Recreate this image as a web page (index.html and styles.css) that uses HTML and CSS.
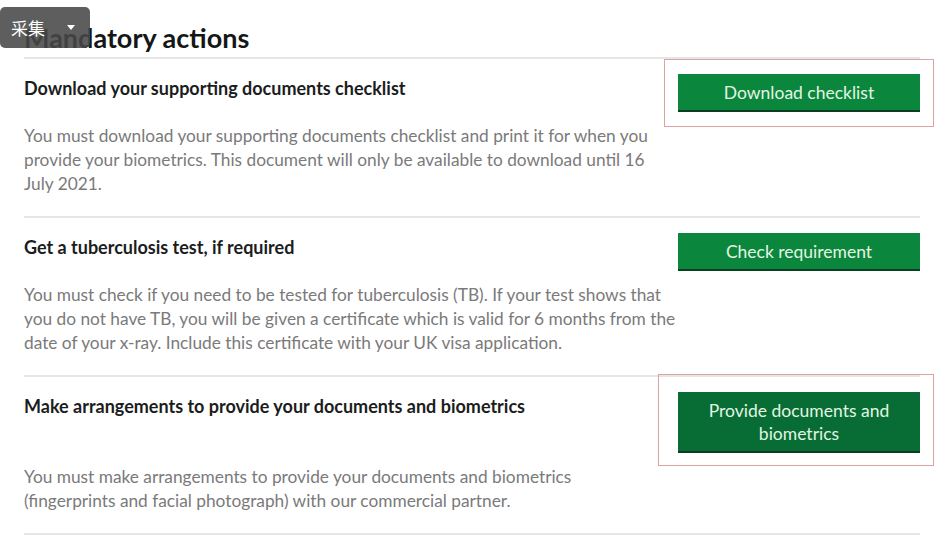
FILE: index.html
```html
<!DOCTYPE html>
<html lang="en">
<head>
<meta charset="utf-8">
<title>Mandatory actions</title>
<link rel="stylesheet" href="styles.css">
</head>
<body>
<div class="badge"><span class="badge-text">采集</span><span class="badge-caret"></span></div>
<main class="page">
  <h1 class="title">Mandatory actions</h1>
  <section class="action">
    <div class="action-head">
      <h2 class="action-title">Download your supporting documents checklist</h2>
      <div class="btn-wrap marked marked-1"><a class="btn">Download checklist</a></div>
    </div>
    <p class="action-text">You must download your supporting documents checklist and print it for when you<br>provide your biometrics. This document will only be available to download until 16<br>July 2021.</p>
  </section>
  <section class="action">
    <div class="action-head">
      <h2 class="action-title">Get a tuberculosis test, if required</h2>
      <div class="btn-wrap"><a class="btn">Check requirement</a></div>
    </div>
    <p class="action-text">You must check if you need to be tested for tuberculosis (TB). If your test shows that<br>you do not have TB, you will be given a certificate which is valid for 6 months from the<br>date of your x-ray. Include this certificate with your UK visa application.</p>
  </section>
  <section class="action action-last">
    <div class="action-head">
      <h2 class="action-title">Make arrangements to provide your documents and biometrics</h2>
      <div class="btn-wrap marked marked-3"><a class="btn btn-dark">Provide documents and<br>biometrics</a></div>
    </div>
    <p class="action-text">You must make arrangements to provide your documents and biometrics<br>(fingerprints and facial photograph) with our commercial partner.</p>
  </section>
</main>
</body>
</html>
```

FILE: styles.css
```css
html, body {
  margin: 0;
  padding: 0;
  background: #ffffff;
}

body {
  font-family: Lato, "Noto Sans", "Liberation Sans", sans-serif;
  color: #1d1f1f;
}

.page {
  padding: 0 30px 0 24px;
}

.title {
  margin: 0;
  padding-top: 22px;
  font-size: 27px;
  line-height: 32px;
  font-weight: 700;
  color: #151717;
  border-bottom: 2px solid #e6e6e6;
  padding-bottom: 3px;
}

.action {
  border-bottom: 2px solid #e6e6e6;
  padding: 15px 0 20px;
}

.action-last {
  padding-bottom: 20px;
}

.action-head {
  display: flex;
  align-items: flex-start;
  justify-content: space-between;
}

.action-title {
  margin: 2px 0 0;
  font-size: 18px;
  line-height: 24px;
  font-weight: 700;
  color: #1b1d1d;
}

.btn-wrap {
  position: relative;
  width: 242px;
  flex: none;
}

.btn {
  display: block;
  box-sizing: border-box;
  width: 242px;
  padding: 7px 10px 6px;
  background: #0b863d;
  box-shadow: 0 2px 0 #0a3e22;
  color: #e3f5e3;
  font-size: 17.5px;
  line-height: 23px;
  text-align: center;
  text-decoration: none;
}

.btn-dark {
  background: #076d34;
  padding-top: 7px;
  padding-bottom: 6px;
}

.marked::before {
  content: "";
  position: absolute;
  border: 1px solid #dba3a3;
  pointer-events: none;
}

.marked-1::before {
  left: -14px;
  right: -14px;
  top: -15px;
  bottom: -17px;
}

.marked-3::before {
  left: -20px;
  right: -14px;
  top: -18px;
  bottom: -15px;
}

.action-text {
  margin: 14px 0 0;
  max-width: 700px;
  font-size: 17.3px;
  line-height: 24px;
  color: #7a7a7a;
}

.badge {
  position: absolute;
  left: 0;
  top: 7px;
  width: 90px;
  height: 41px;
  border-radius: 5px;
  background: rgba(72, 72, 72, 0.88);
  display: flex;
  align-items: center;
  padding-left: 11px;
  box-sizing: border-box;
  z-index: 5;
}

.badge-text {
  color: #ffffff;
  font-family: "Noto Sans CJK SC", sans-serif;
  font-size: 17px;
  line-height: 20px;
}

.badge-caret {
  margin-left: 22px;
  width: 0;
  height: 0;
  border-left: 4px solid transparent;
  border-right: 4px solid transparent;
  border-top: 5px solid #ffffff;
}
```
